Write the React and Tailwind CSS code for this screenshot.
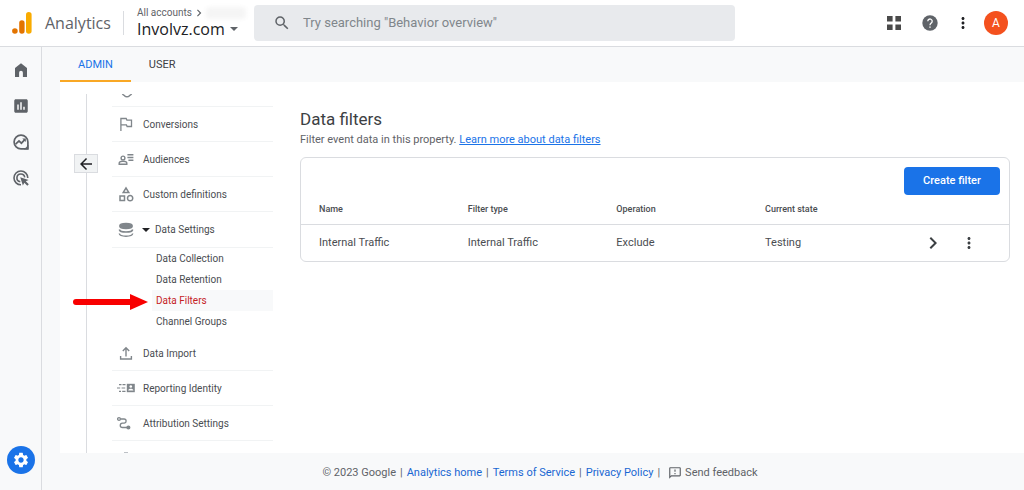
import React, { useState } from 'react';
import {
  MdArrowBack,
  MdChevronRight,
  MdInsertChart,
  MdMoreVert,
  MdOutlineCategory,
  MdOutlineFeedback,
  MdSearch,
  MdSettings,
} from 'react-icons/md';

function Logo() {
  return (
    <svg width="20" height="22" viewBox="0 0 20 22" aria-hidden="true">
      <circle cx="2.9" cy="19" r="2.8" fill="#e37400" />
      <rect x="7.2" y="8.3" width="5.4" height="13.5" rx="2.7" fill="#e37400" />
      <rect x="14" y="0" width="5.6" height="21.8" rx="2.8" fill="#f9ab00" />
    </svg>
  );
}

function AppsIcon() {
  return (
    <svg width="14" height="14" viewBox="0 0 14 14" fill="#4a4a4a">
      <path d="M0 0h5.6v5.6H0zM8.4 0H14v5.6H8.4zM0 8.4h5.6V14H0zM8.4 8.4H14V14H8.4z" />
    </svg>
  );
}

function HelpIcon() {
  return (
    <svg width="16" height="16" viewBox="0 0 16 16" fill="none">
      <circle cx="8" cy="8" r="7.7" fill="#5f6368" />
      <path d="M5.8 6.2a2.2 2.2 0 1 1 3.6 1.7C8.6 8.6 8 9 8 10.200" stroke="#fff" strokeWidth="1.3" />
      <path d="M7.3 11.4h1.4v1.4H7.3z" fill="#fff" />
    </svg>
  );
}

function HomeIcon() {
  return (
    <svg width="16" height="16" viewBox="0 0 16 16" fill="#5f6368">
      <path d="M2 6 8 1.2 14 6v9H9.9v-4.3a1.9 1.9 0 0 0-3.8 0V15H2z" />
    </svg>
  );
}

function ExploreIcon() {
  return (
    <svg width="16" height="16" viewBox="0 0 16 16" fill="none" stroke="#5f6368">
      <path d="M8 1.1a6.9 6.9 0 1 0 0 13.8h6.9V8A6.9 6.9 0 0 0 8 1.1z" strokeWidth="1.7" />
      <path d="M2.6 10.2 6 6.9l2.4 2.3 3.4-3.5" strokeWidth="1.7" />
      <path d="M9.3 4.6h3.5v3.5z" fill="#5f6368" stroke="none" />
      <path d="M11.4 14.9c1.8-.8 2.8-1.9 3.5-3.5v3.5z" fill="#5f6368" />
    </svg>
  );
}

function AdvertisingIcon() {
  return (
    <svg width="16" height="16" viewBox="0 0 16 16" fill="none" stroke="#5f6368" strokeWidth="1.6">
      <path d="M14.8 8A6.9 6.9 0 1 0 8 14.8" />
      <path d="M11.7 7.4A3.9 3.9 0 1 0 7.3 11.8" />
      <path d="m7.2 7.2 8.4 2.7-2.8 1.4 3 3-1.5 1.5-3-3-1.4 2.8z" fill="#5f6368" stroke="none" />
    </svg>
  );
}

function FlagIcon() {
  return (
    <svg width="16" height="16" viewBox="0 0 16 16" fill="none" stroke="#80868b" strokeWidth="1.3">
      <path d="M2.9 15V2.5h5.3l.7 1.7h4.6v6.3H9.1l-.7-1.7H2.9" />
    </svg>
  );
}

function AudienceIcon() {
  return (
    <svg width="16" height="16" viewBox="0 0 16 16" fill="none" stroke="#80868b" strokeWidth="1.4">
      <circle cx="5" cy="7" r="1.9" />
      <path d="M1.2 13.3v-1.2c0-1.2 1.9-1.9 3.8-1.9s3.8.7 3.8 1.9v1.2z" />
      <path d="M9.4 3.7h6M9.4 6.5h6M10.4 9.3h5" />
    </svg>
  );
}

function DatabaseIcon() {
  return (
    <svg width="16" height="16" viewBox="0 0 16 16" fill="none" stroke="#80868b" strokeWidth="1.5">
      <ellipse cx="8" cy="4.1" rx="6.2" ry="2.5" fill="#80868b" />
      <path d="M1.3 7.5c.6 3.4 12.8 3.4 13.4 0M1.3 11.5c.6 3.6 12.8 3.6 13.4 0" />
    </svg>
  );
}

function ImportIcon() {
  return (
    <svg width="16" height="16" viewBox="0 0 16 16" fill="none" stroke="#80868b" strokeWidth="1.4">
      <path d="M8 11.4V3M4.8 6 8 2.8 11.2 6M2.6 11v3h10.8v-3" />
    </svg>
  );
}

function IdentityIcon() {
  return (
    <svg width="18" height="12" viewBox="0 0 18 12" fill="none" stroke="#80868b" strokeWidth="1.2">
      <path d="M2 2.7h2.5M5.5 2.7h3M0 6h3.2M4.6 6h3.6M2 9.3h2M5.2 9.3h3.3" />
      <path d="M9.8 1.8h8v8.4h-8z" fill="#80868b" stroke="none" />
      <circle cx="13.8" cy="4.5" r="1.3" fill="#fff" stroke="none" />
      <path d="M11.2 8.6c0-2.4 5.2-2.4 5.2 0z" fill="#fff" stroke="none" />
    </svg>
  );
}

function AttributionIcon() {
  return (
    <svg width="18" height="16" viewBox="1 0 18 16" fill="none" stroke="#80868b" strokeWidth="1.3">
      <circle cx="3" cy="4" r="1.4" />
      <path d="M4.5 4H8c2.8 0 2.8 3.8.2 4.2H6.5c-3 .3-3 4.3 0 4.3h5" />
      <circle cx="12.4" cy="12.5" r="1.4" fill="#80868b" />
    </svg>
  );
}

const sideLinks = [
  { label: 'Home', Icon: HomeIcon },
  { label: 'Reports', Icon: () => <MdInsertChart size={18} color="#5f6368" /> },
  { label: 'Explore', Icon: ExploreIcon },
  { label: 'Advertising', Icon: AdvertisingIcon },
];

const topItems = [
  { label: 'Conversions', Icon: FlagIcon },
  { label: 'Audiences', Icon: AudienceIcon },
  { label: 'Custom definitions', Icon: () => <MdOutlineCategory size={18} color="#80868b" /> },
];

const dataSettings = ['Data Collection', 'Data Retention', 'Data Filters', 'Channel Groups'];

const bottomItems = [
  { label: 'Data Import', Icon: ImportIcon },
  { label: 'Reporting Identity', Icon: IdentityIcon },
  { label: 'Attribution Settings', Icon: AttributionIcon },
];

const filters = [
  { name: 'Internal Traffic', type: 'Internal Traffic', operation: 'Exclude', state: 'Testing' },
];

function MenuItem({ label, Icon }) {
  return (
    <li className="h-[35px] border-b border-[#f1f3f4]">
      <a href="#" className="flex h-full items-center gap-[3px]">
        <span className="flex w-7 justify-center">
          <Icon />
        </span>
        {label}
      </a>
    </li>
  );
}

function Header() {
  return (
    <header className="flex h-[47px] shrink-0 items-center border-b border-[#dadce0] bg-white">
      <a href="#" className="flex w-[123px] shrink-0 items-center gap-[13px] pl-3 font-['Open_Sans',sans-serif] text-base text-[#5f6368]">
        <Logo />
        Analytics
      </a>
      <div className="h-6 border-l border-[#dadce0]" />
      <div className="w-[130px] shrink-0 pl-[13px]">
        <div className="flex h-3 items-center text-[10px] leading-3 text-[#5f6368]">
          <span>All accounts</span>
          <MdChevronRight size={14} />
          <span className="h-3 w-10 rounded-sm bg-[#f5f5f5] blur-[2px]" />
        </div>
        <button type="button" className="flex items-center gap-[5px] font-['Open_Sans',sans-serif] text-base leading-5 text-[#202124]">
          Involvz.com
          <span className="border-x-4 border-t-4 border-x-transparent border-t-[#5f6368]" />
        </button>
      </div>
      <label className="flex h-9 w-[481px] items-center gap-3 rounded bg-[#e8eaed] pl-[19px]">
        <MdSearch size={18} color="#5f6368" />
        <input
          type="search"
          aria-label="Search"
          placeholder={'Try searching "Behavior overview"'}
          className="min-w-0 flex-1 bg-transparent text-[13px] outline-none placeholder:text-[#80868b]"
        />
      </label>
      <div className="ml-auto flex items-center pr-4 text-[#5f6368]">
        <button type="button" aria-label="Apps" className="mr-[21px]">
          <AppsIcon />
        </button>
        <button type="button" aria-label="Help" className="mr-4">
          <HelpIcon />
        </button>
        <button type="button" aria-label="More" className="mr-3 text-[#202124]">
          <MdMoreVert size={18} />
        </button>
        <button type="button" className="size-6 rounded-full bg-[#f4511e] text-xs text-white">A</button>
      </div>
    </header>
  );
}

function SettingsMenu({ active, onSelect }) {
  return (
    <nav className="w-[161px] shrink-0 pt-3 text-[10px] text-[#4a4d51]">
      <ul>
        <li className="flex h-[13px] border-b border-[#f1f3f4] pl-[9px]">
          <svg width="12" height="4" viewBox="0 0 12 4" fill="none" stroke="#80868b" strokeWidth="1.5">
            <path d="M1.5 0c.5 1.2 1.5 1 2.3 1.9.9 1 3.5 1 4.4 0C9 1 10 1.2 10.5 0" />
          </svg>
        </li>
        {topItems.map((item) => (
          <MenuItem key={item.label} {...item} />
        ))}
        <li>
          <button type="button" className="flex h-[36px] w-full items-center border-b border-[#f1f3f4]">
            <span className="flex w-7 justify-center">
              <DatabaseIcon />
            </span>
            <span className="mr-[5px] ml-[2px] border-x-4 border-t-4 border-x-transparent border-t-[#202124]" />
            Data Settings
          </button>
          <ul className="pb-1 pl-[40px]">
            {dataSettings.map((label) => (
              <li key={label} className="relative">
                <button
                  type="button"
                  onClick={() => onSelect(label)}
                  className={`flex h-[21px] w-full items-center pl-1 ${active === label ? 'bg-[#f8f9fa] text-[#c5221f]' : ''}`}
                >
                  {label}
                </button>
                {label === 'Data Filters' && (
                  <svg className="absolute top-1 right-full mr-1" width="76" height="16" viewBox="0 0 76 16" fill="#f80000">
                    <path d="M4 5h54V0l18 8-18 8v-5H4a3 3 0 0 1 0-6z" />
                  </svg>
                )}
              </li>
            ))}
          </ul>
        </li>
        {bottomItems.map((item) => (
          <MenuItem key={item.label} {...item} />
        ))}
        <li className="flex h-3 items-end pl-3">
          <span className="h-px w-1 bg-[#bdc1c6]" />
        </li>
      </ul>
    </nav>
  );
}

function DataFilters() {
  return (
    <main className="min-w-0 flex-1 pt-[25px] pr-[14px] pl-[27px]">
      <h1 className="text-[17px] leading-6 text-[#3c4043]">Data filters</h1>
      <p className="text-[11px] leading-[18px] text-[#5f6368]">
        Filter event data in this property.{' '}
        <a href="#" className="text-[#1a73e8] underline">Learn more about data filters</a>
      </p>
      <section className="mt-2 rounded-md border border-[#dadce0]">
        <div className="flex justify-end px-[9px] pt-[9px]">
          <button type="button" className="h-7 w-24 rounded-sm bg-[#1a73e8] text-[11px] font-medium text-white">
            Create filter
          </button>
        </div>
        <table className="w-full table-fixed text-left text-[#4a4d51]">
          <thead>
            <tr className="h-[29px] border-b border-[#dadce0] text-[9px]">
              <th className="w-[21%] pl-[18px] font-medium">Name</th>
              <th className="w-[21%] pl-[18px] font-medium">Filter type</th>
              <th className="w-[21%] pl-[18px] font-medium">Operation</th>
              <th className="w-[21%] pl-[18px] font-medium">Current state</th>
              <th aria-label="Actions" />
            </tr>
          </thead>
          <tbody>
            {filters.map((filter) => (
              <tr key={filter.name} className="h-[37px] text-[11px]">
                <td className="pl-[18px]">{filter.name}</td>
                <td className="pl-[18px]">{filter.type}</td>
                <td className="pl-[18px]">{filter.operation}</td>
                <td className="pl-[18px]">{filter.state}</td>
                <td>
                  <div className="flex items-center justify-end gap-[15px] pr-[31px] text-[#3c4043]">
                    <button type="button" aria-label="Open filter">
                      <MdChevronRight size={24} />
                    </button>
                    <button type="button" aria-label="Filter options">
                      <MdMoreVert size={18} />
                    </button>
                  </div>
                </td>
              </tr>
            ))}
          </tbody>
        </table>
      </section>
    </main>
  );
}

function Footer() {
  return (
    <footer className="flex h-[37px] shrink-0 items-center justify-center gap-1 pt-[3px] pl-[14px] text-[11px] text-[#5f6368]">
      <span>© 2023 Google</span>|
      <a href="#" className="text-[#1967d2]">Analytics home</a>|
      <a href="#" className="text-[#1967d2]">Terms of Service</a>|
      <a href="#" className="text-[#1967d2]">Privacy Policy</a>|
      <button type="button" className="ml-1 flex items-center gap-[3px]">
        <MdOutlineFeedback size={14} />
        Send feedback
      </button>
    </footer>
  );
}

export default function App() {
  const [tab, setTab] = useState('ADMIN');
  const [active, setActive] = useState('Data Filters');

  return (
    <div className="flex h-screen flex-col overflow-hidden bg-[#f8f9fa] font-[Roboto,sans-serif]">
      <Header />
      <div className="flex min-h-0 flex-1">
        <aside className="flex w-[42px] shrink-0 flex-col items-center border-r border-[#dadce0] pt-[14px] pb-4">
          <nav className="flex flex-col gap-[18px]">
            {sideLinks.map(({ label, Icon }) => (
              <a key={label} href="#" aria-label={label} className="flex size-[18px] items-center justify-center">
                <Icon />
              </a>
            ))}
          </nav>
          <button type="button" aria-label="Admin" className="mt-auto flex size-7 items-center justify-center rounded-full bg-[#1a73e8] text-white">
            <MdSettings size={18} />
          </button>
        </aside>

        <div className="flex min-w-0 flex-1 flex-col">
          <div className="flex h-[35px] shrink-0 pl-[18px]">
            {['ADMIN', 'USER'].map((name) => (
              <button
                key={name}
                type="button"
                onClick={() => setTab(name)}
                className={`border-b-2 px-[18px] pt-[3px] text-[11px] ${tab === name ? 'border-[#f9a825] text-[#1a73e8]' : 'border-transparent text-[#3c4043]'}`}
              >
                {name}
              </button>
            ))}
          </div>

          <div className="ml-[18px] flex min-h-0 flex-1 overflow-hidden bg-white">
            <div className="flex w-[52px] shrink-0 flex-col items-center pt-3">
              <div className="h-[60px] border-l border-[#dadce0]" />
              <button type="button" aria-label="Back" className="flex h-[19px] w-6 items-center justify-center border border-[#dadce0] bg-[#f1f3f4] text-[#202124]">
                <MdArrowBack size={18} />
              </button>
              <div className="flex-1 border-l border-[#dadce0]" />
            </div>
            <SettingsMenu active={active} onSelect={setActive} />
            <DataFilters />
          </div>
          <Footer />
        </div>
      </div>
    </div>
  );
}
